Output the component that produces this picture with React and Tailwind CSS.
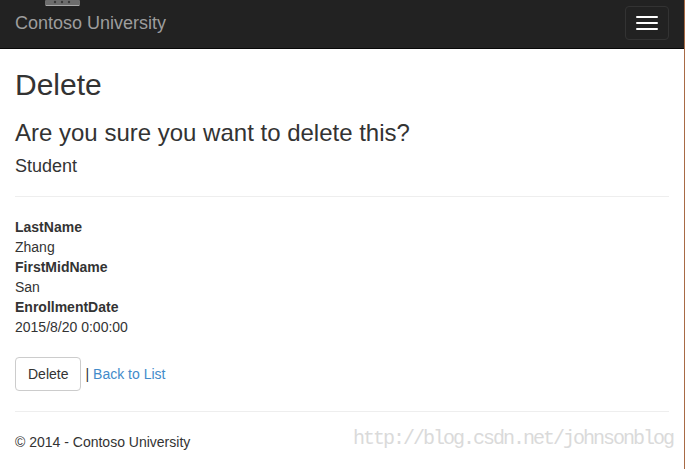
import React from 'react';

// Delete confirmation page (Contoso University)

function Navbar() {
  return (
    <div className="relative h-[49px] bg-[#222] border-b border-[#080808] flex justify-between">
      {/* cut-off logo at the top */}
      <svg className="absolute left-[45px] top-0" width="36" height="8" viewBox="0 0 36 8">
        <rect x="0" y="0" width="35" height="6" rx="1" fill="#6d6d6d" />
        <rect x="1" y="5" width="33" height="1" fill="#a9a9a9" />
        <circle cx="10" cy="2" r="1.2" fill="#3a3a3a" />
        <circle cx="17" cy="2" r="1.2" fill="#3a3a3a" />
        <circle cx="24" cy="2" r="1.2" fill="#3a3a3a" />
      </svg>
      <a className="px-[15px] py-[13px] text-[18px] leading-[20px] text-[#9d9d9d]">Contoso University</a>
      <button className="mt-[6px] mr-[15px] w-[44px] h-[34px] border border-[#333] rounded-[4px] flex flex-col items-center justify-center gap-[4px]">
        <span className="block w-[22px] h-[2px] bg-white rounded-[1px]" />
        <span className="block w-[22px] h-[2px] bg-white rounded-[1px]" />
        <span className="block w-[22px] h-[2px] bg-white rounded-[1px]" />
      </button>
    </div>
  );
}

function Field({ label, value }) {
  return (
    <>
      <dt className="font-bold">{label}</dt>
      <dd>{value}</dd>
    </>
  );
}

export default function App() {
  return (
    <div
      className="w-[685px] h-[469px] overflow-hidden bg-white border-r border-[#a86a45] text-[14px] leading-[20px] text-[#333]"
      style={{ fontFamily: '"Liberation Sans", Arial, sans-serif' }}
    >
      <Navbar />
      <div className="relative px-[15px]">
        <h2 className="mt-[19px] mb-[10px] text-[30px] leading-[33px]">Delete</h2>
        <h3 className="mt-[19px] mb-[10px] text-[24px] leading-[26px]">Are you sure you want to delete this?</h3>
        <div>
          <h4 className="mb-[10px] text-[18px] leading-[20px]">Student</h4>
          <hr className="mt-[20px] mb-[20px] border-0 border-t border-[#eee]" />
          <dl className="mb-[20px]">
            <Field label="LastName" value="Zhang" />
            <Field label="FirstMidName" value="San" />
            <Field label="EnrollmentDate" value="2015/8/20 0:00:00" />
          </dl>
          <form className="flex items-center">
            <button
              type="button"
              className="px-[12px] py-[6px] border border-[#ccc] rounded-[4px] bg-white text-[#333] leading-[20px]"
            >
              Delete
            </button>
            <span className="ml-[4px]">|</span>
            <a className="ml-[4px] text-[#428bca]">Back to List</a>
          </form>
        </div>
        <hr className="mt-[20px] mb-[20px] border-0 border-t border-[#eee]" />
        <footer className="flex items-start">
          <p>© 2014 - Contoso University</p>
          <span
            className="ml-auto mr-[-4px] mt-[-3px] text-[20px] leading-[20px] tracking-[-2px] text-[#dadada]"
            style={{ fontFamily: '"Liberation Mono", monospace' }}
          >
            http://blog.csdn.net/johnsonblog
          </span>
        </footer>
      </div>
    </div>
  );
}
